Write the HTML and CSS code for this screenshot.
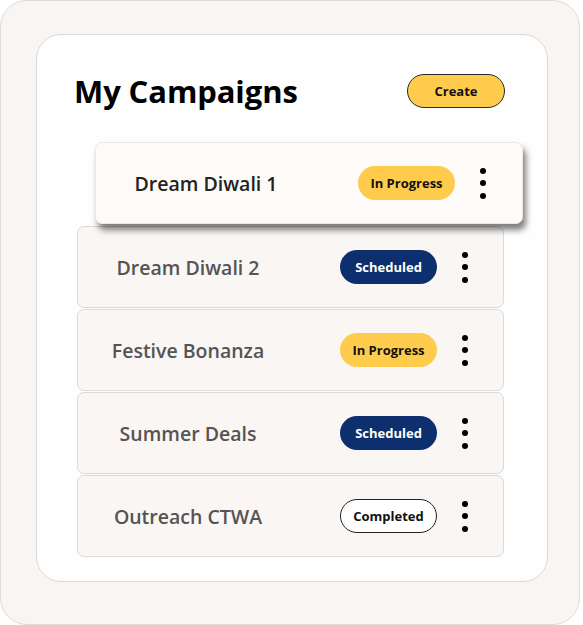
FILE: index.html
```html
<!DOCTYPE html>
<html lang="en">
<head>
<meta charset="utf-8">
<title>My Campaigns</title>
<link rel="stylesheet" href="styles.css">
</head>
<body>
<div class="frame">
  <div class="card">
    <header class="head">
      <h1 class="title">My Campaigns</h1>
      <button class="create">Create</button>
    </header>
    <ul class="list">
      <li class="row row-raised">
        <span class="name">Dream Diwali 1</span>
        <span class="badge badge-progress">In Progress</span>
        <span class="more"><i></i><i></i><i></i></span>
      </li>
      <li class="row">
        <span class="name">Dream Diwali 2</span>
        <span class="badge badge-scheduled">Scheduled</span>
        <span class="more"><i></i><i></i><i></i></span>
      </li>
      <li class="row">
        <span class="name">Festive Bonanza</span>
        <span class="badge badge-progress">In Progress</span>
        <span class="more"><i></i><i></i><i></i></span>
      </li>
      <li class="row">
        <span class="name">Summer Deals</span>
        <span class="badge badge-scheduled">Scheduled</span>
        <span class="more"><i></i><i></i><i></i></span>
      </li>
      <li class="row">
        <span class="name">Outreach CTWA</span>
        <span class="badge badge-completed">Completed</span>
        <span class="more"><i></i><i></i><i></i></span>
      </li>
    </ul>
  </div>
</div>
</body>
</html>
```
FILE: styles.css
```css
* { box-sizing: border-box; }
html, body { margin: 0; padding: 0; background: #ffffff; }
body { font-family: "Open Sans", "Liberation Sans", sans-serif; }

.frame {
  width: 580px;
  height: 625px;
  background: #f9f5f2;
  border: 1px solid #dedbd9;
  border-radius: 27px;
  padding: 33px 32px 43px 35px;
}

.card {
  width: 512px;
  height: 548px;
  background: #fefefe;
  border: 1px solid #dcd9d7;
  border-radius: 25px;
  padding: 39px 0 0 40px;
}

.head {
  display: flex;
  align-items: center;
  justify-content: space-between;
  width: 428px;
  height: 34px;
}

.title {
  margin: 0 0 0 -3px;
  font-size: 31px;
  font-weight: 700;
  color: #000;
  letter-spacing: -0.1px;
}

.create {
  width: 98px;
  height: 34px;
  border: 1px solid #2a2a2a;
  border-radius: 17px;
  background: #fecb4c;
  font-family: inherit;
  font-size: 13px;
  font-weight: 700;
  color: #111;
  padding: 0;
}

.list {
  list-style: none;
  margin: 35px 0 0 0;
  padding: 0;
  display: flex;
  flex-direction: column;
  gap: 1px;
  width: 427px;
}

.row {
  position: relative;
  display: flex;
  align-items: center;
  height: 82px;
  background: #f9f6f4;
  border: 1px solid #dcd9d7;
  border-radius: 7px;
}

.row-raised {
  width: 428px;
  transform: translate(18px, -1px);
  background: #fdfaf8;
  border-color: #ebe8e6;
  box-shadow: 3px 6px 6px rgba(0, 0, 0, 0.5);
  z-index: 2;
}

.name {
  width: 220px;
  text-align: center;
  font-size: 19.5px;
  font-weight: 600;
  color: #555353;
}
.row-raised .name { color: #222; }

.badge {
  margin-left: 42px;
  width: 97px;
  height: 34px;
  border-radius: 17px;
  display: flex;
  align-items: center;
  justify-content: center;
  font-size: 13px;
  font-weight: 700;
}
.badge-progress { background: #fecb4c; color: #111; }
.badge-scheduled { background: #0e2f6d; color: #fff; }
.badge-completed { background: #fff; color: #111; border: 1px solid #222; }

.more {
  margin-left: 25px;
  display: flex;
  flex-direction: column;
  gap: 6.5px;
  width: 6px;
}
.more i {
  display: block;
  width: 6px;
  height: 6px;
  border-radius: 50%;
  background: #000;
}
```
